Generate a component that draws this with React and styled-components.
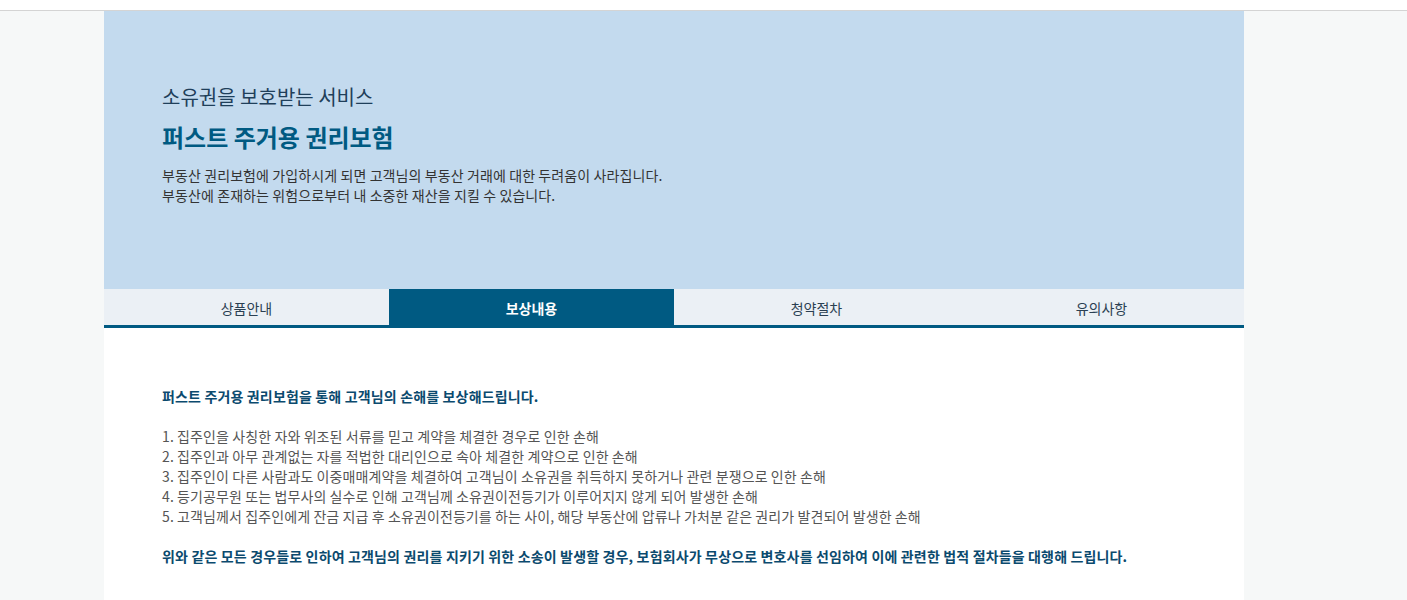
import React, { useState } from "react";
import styled, { createGlobalStyle } from "styled-components";

const GlobalStyle = createGlobalStyle`
  html, body {
    margin: 0;
    padding: 0;
    background: #fff;
    font-family: "Noto Sans CJK KR", "Noto Sans", sans-serif;
  }
`;

const tabs = ["상품안내", "보상내용", "청약절차", "유의사항"];

const items = [
  "집주인을 사칭한 자와 위조된 서류를 믿고 계약을 체결한 경우로 인한 손해",
  "집주인과 아무 관계없는 자를 적법한 대리인으로 속아 체결한 계약으로 인한 손해",
  "집주인이 다른 사람과도 이중매매계약을 체결하여 고객님이 소유권을 취득하지 못하거나 관련 분쟁으로 인한 손해",
  "등기공무원 또는 법무사의 실수로 인해 고객님께 소유권이전등기가 이루어지지 않게 되어 발생한 손해",
  "고객님께서 집주인에게 잔금 지급 후 소유권이전등기를 하는 사이, 해당 부동산에 압류나 가처분 같은 권리가 발견되어 발생한 손해",
];

export default function App() {
  const [active, setActive] = useState(1);

  return (
    <>
      <GlobalStyle />
      <TopBar />
      <Page>
        <Container>
          <Hero>
            <Eyebrow>소유권을 보호받는 서비스</Eyebrow>
            <Title>퍼스트 주거용 권리보험</Title>
            <Desc>
              부동산 권리보험에 가입하시게 되면 고객님의 부동산 거래에 대한 두려움이 사라집니다.
              <br />
              부동산에 존재하는 위험으로부터 내 소중한 재산을 지킬 수 있습니다.
            </Desc>
          </Hero>
          <TabBar>
            {tabs.map((t, i) => (
              <Tab key={t} $active={i === active} onClick={() => setActive(i)}>
                {t}
              </Tab>
            ))}
          </TabBar>
          <Content>
            <Lead>퍼스트 주거용 권리보험을 통해 고객님의 손해를 보상해드립니다.</Lead>
            <List>
              {items.map((item, i) => (
                <li key={i}>
                  {i + 1}. {item}
                </li>
              ))}
            </List>
            <Lead>
              위와 같은 모든 경우들로 인하여 고객님의 권리를 지키기 위한 소송이 발생할 경우, 보험회사가 무상으로 변호사를 선임하여 이에 관련한 법적 절차들을 대행해 드립니다.
            </Lead>
          </Content>
        </Container>
      </Page>
    </>
  );
}

const TopBar = styled.div`
  height: 10px;
  background: #fff;
  border-bottom: 1px solid #d4d4d4;
`;

const Page = styled.div`
  background: #f6f8f8;
  min-height: 589px;
`;

const Container = styled.div`
  width: 1140px;
  margin-left: 104px;
  background: #fff;
`;

const Hero = styled.div`
  height: 278px;
  box-sizing: border-box;
  padding: 72px 58px 0;
  background: #c3daee;
`;

const Eyebrow = styled.p`
  margin: 0;
  font-size: 20px;
  line-height: 28px;
  color: #1f3f5a;
`;

const Title = styled.h1`
  margin: 10px 0 0;
  font-size: 24px;
  line-height: 32px;
  font-weight: 700;
  color: #005a82;
`;

const Desc = styled.p`
  margin: 12px 0 0;
  font-size: 14px;
  line-height: 20px;
  letter-spacing: 0.1px;
  color: #333;
`;

const TabBar = styled.div`
  display: grid;
  grid-template-columns: repeat(4, 1fr);
  background: #ebf0f5;
  border-bottom: 3px solid #005a82;
`;

const Tab = styled.button`
  height: 36px;
  border: 0;
  padding: 2px 0 0;
  font-family: inherit;
  font-size: 14px;
  font-weight: ${(p) => (p.$active ? 700 : 400)};
  color: ${(p) => (p.$active ? "#fff" : "#2a3f52")};
  background: ${(p) => (p.$active ? "#005a82" : "transparent")};
  cursor: pointer;
`;

const Content = styled.div`
  padding: 58px 58px 40px;
`;

const Lead = styled.p`
  margin: 0;
  font-size: 14px;
  line-height: 20px;
  font-weight: 700;
  letter-spacing: 0.15px;
  color: #0b4a6e;
`;

const List = styled.ol`
  list-style: none;
  margin: 20px 0 20px;
  padding: 0;
  font-size: 14px;
  line-height: 20px;
  letter-spacing: 0.1px;
  color: #555;
`;
